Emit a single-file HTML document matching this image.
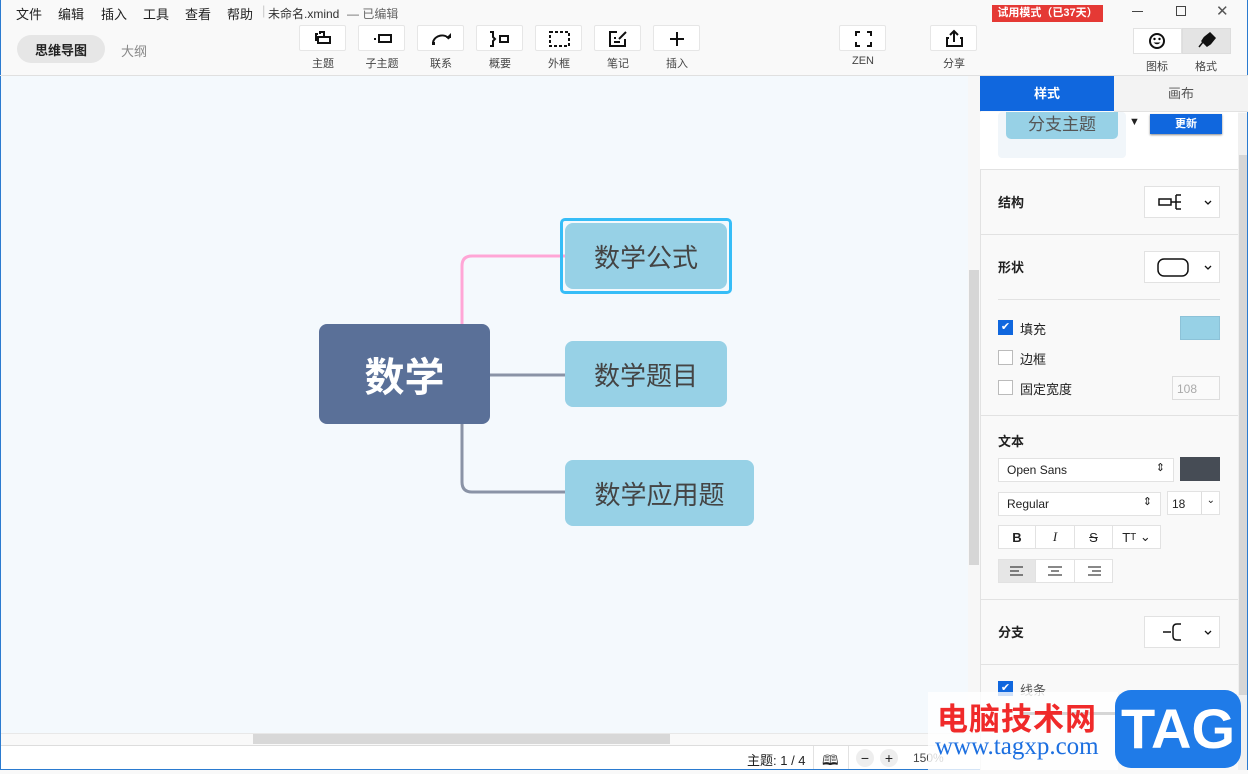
<!DOCTYPE html>
<html><head><meta charset="utf-8"><style>
*{box-sizing:border-box;margin:0;padding:0}
body{width:1248px;height:770px;overflow:hidden;background:#f9f9f9;font-family:"Liberation Sans","Noto Sans CJK SC",sans-serif;position:relative;color:#222}
.a{position:absolute}
.menu span{position:absolute;top:4px;font-size:13px;color:#222}
.tb{position:absolute;top:25px;width:47px;height:26px;background:#fff;border:1px solid #e6e6e6;border-radius:2px}
.tl{position:absolute;top:55px;font-size:11px;color:#444;text-align:center;width:60px}
.node{position:absolute;background:#97d1e6;border-radius:8px;color:#444;font-size:26px;display:flex;align-items:center;justify-content:center}
.sec{position:absolute;left:980px;width:258px;border-top:1px solid #e2e2e2}
.lbl{position:absolute;font-size:13px;font-weight:bold;color:#222}
.dd{position:absolute;background:#fff;border:1px solid #e2e2e2;height:32px}
.cb{position:absolute;width:15px;height:15px;border:1px solid #bbb;background:#fff}
.t13{position:absolute;font-size:13px;color:#222}
.btn{position:absolute;height:24px;background:#fff;border:1px solid #e2e2e2;display:flex;align-items:center;justify-content:center;font-size:13px}
</style></head><body>
<div class="a" style="left:0;top:0;width:1248px;height:770px;border:1px solid #2b7bd0;border-top:none"></div>
<div class="menu">
<span style="left:16px">文件</span><span style="left:58px">编辑</span><span style="left:101px">插入</span><span style="left:143px">工具</span><span style="left:185px">查看</span><span style="left:227px">帮助</span>
<span style="left:262px;top:3px;color:#ccc">|</span>
<span style="left:268px;font-size:12px;color:#333;top:5px">未命名.xmind</span><span style="left:347px;font-size:12px;color:#666;top:5px">— 已编辑</span>
</div>
<div class="a" style="left:17px;top:35px;width:88px;height:28px;background:#e6e6e6;border-radius:14px;font-size:13px;font-weight:bold;display:flex;align-items:center;justify-content:center">思维导图</div>
<div class="a" style="left:121px;top:41px;font-size:13px;color:#888">大纲</div>

<div class="tb" style="left:299px"><svg width="47" height="26"><path d="M18 8h-2v6h2M20 8v-2h4v4M18 11h12v6h-12z" fill="none" stroke="#111" stroke-width="2"/></svg></div><div class="tl" style="left:293px">主题</div>
<div class="tb" style="left:358px"><svg width="47" height="26"><rect x="15" y="12" width="2" height="2" fill="#111"/><rect x="20" y="9" width="12" height="7" fill="none" stroke="#111" stroke-width="2"/></svg></div><div class="tl" style="left:352px">子主题</div>
<div class="tb" style="left:417px"><svg width="47" height="26"><path d="M15 16c2-7 12-9 16-3" fill="none" stroke="#111" stroke-width="2"/><path d="M28 12h5v-5z" fill="#111"/><rect x="14" y="16" width="3" height="3" fill="#111"/></svg></div><div class="tl" style="left:411px">联系</div>
<div class="tb" style="left:476px"><svg width="47" height="26"><path d="M13 6h3v5l2 2l-2 2v5h-3" fill="none" stroke="#111" stroke-width="2"/><rect x="23" y="10" width="8" height="6" fill="none" stroke="#111" stroke-width="2"/></svg></div><div class="tl" style="left:470px">概要</div>
<div class="tb" style="left:535px"><svg width="47" height="26"><rect x="14" y="6" width="19" height="14" fill="none" stroke="#111" stroke-width="2" stroke-dasharray="3 2"/></svg></div><div class="tl" style="left:529px">外框</div>
<div class="tb" style="left:594px"><svg width="47" height="26"><path d="M22 6h-7v14h15v-7M19 12h2M19 16h6M24 13l7-7" fill="none" stroke="#111" stroke-width="2"/></svg></div><div class="tl" style="left:588px">笔记</div>
<div class="tb" style="left:653px"><svg width="47" height="26"><path d="M23 6v14M16 13h14" stroke="#111" stroke-width="2"/></svg></div><div class="tl" style="left:647px">插入</div>
<div class="tb" style="left:839px"><svg width="47" height="26"><path d="M16 10v-4h4M27 6h4v4M31 16v4h-4M20 20h-4v-4" fill="none" stroke="#111" stroke-width="2"/></svg></div><div class="tl" style="left:833px">ZEN</div>
<div class="tb" style="left:930px"><svg width="47" height="26"><path d="M18 12h-2v8h15v-8h-2M23 16v-11M19 9l4-4l4 4" fill="none" stroke="#111" stroke-width="2"/></svg></div><div class="tl" style="left:924px">分享</div>

<div class="a" style="left:992px;top:5px;width:111px;height:17px;background:#e53935;color:#fff;font-size:11px;font-weight:bold;text-align:center;line-height:17px;white-space:nowrap;overflow:hidden">试用模式（已37天）</div>
<div class="a" style="left:1132px;top:11px;width:11px;height:1px;background:#444"></div>
<div class="a" style="left:1176px;top:6px;width:10px;height:10px;border:1px solid #444"></div>
<div class="a" style="left:1216px;top:2px;font-size:15px;color:#555">✕</div>
<div class="a" style="left:1133px;top:28px;width:49px;height:26px;background:#fff;border:1px solid #e2e2e2"><svg width="47" height="24"><circle cx="23" cy="12" r="7" fill="none" stroke="#111" stroke-width="2"/><circle cx="20.5" cy="10" r="1.2"/><circle cx="25.5" cy="10" r="1.2"/><path d="M19.5 13.5q3.5 3.5 7 0z" fill="#111"/></svg></div>
<div class="a" style="left:1182px;top:28px;width:49px;height:26px;background:#e4e4e4;border:1px solid #ddd"><svg width="47" height="24"><path d="M22 8l5-4l5 5l-4 5zM21 9l6 6l-3 2l-5-5zM20 13l-4 5" fill="#111" stroke="#111" stroke-width="1.5"/></svg></div>
<div class="tl" style="left:1127px;top:58px">图标</div><div class="tl" style="left:1176px;top:58px">格式</div>
<div class="a" style="left:0;top:75px;width:1248px;height:1px;background:#e0e0e0"></div>

<div class="a" style="left:1px;top:76px;width:967px;height:658px;background:#f4f9fd"></div>
<div class="a" style="left:968px;top:76px;width:12px;height:658px;background:#f7f7f7"></div>
<div class="a" style="left:969px;top:270px;width:10px;height:295px;background:#d6d6d6"></div>
<div class="a" style="left:1px;top:733px;width:979px;height:12px;background:#f9f9f9;border-top:1px solid #e8e8e8"></div>
<div class="a" style="left:253px;top:734px;width:417px;height:10px;background:#d8d8d8"></div>
<div class="a" style="left:1px;top:745px;width:979px;height:24px;background:#fff;border-top:1px solid #ddd"></div>
<div class="a" style="left:747px;top:750px;font-size:13px">主题: 1 / 4</div>
<div class="a" style="left:813px;top:746px;width:1px;height:23px;background:#e2e2e2"></div>
<div class="a" style="left:822px;top:750px;font-size:14px">🕮</div>
<div class="a" style="left:848px;top:746px;width:1px;height:23px;background:#e2e2e2"></div>
<div class="a" style="left:856px;top:749px;width:18px;height:18px;border-radius:9px;background:#eee;text-align:center;font-size:14px;line-height:18px">−</div>
<div class="a" style="left:880px;top:749px;width:18px;height:18px;border-radius:9px;background:#eee;text-align:center;font-size:14px;line-height:18px">+</div>
<div class="a" style="left:913px;top:751px;font-size:12px;color:#444">150%</div>

<svg class="a" style="left:0;top:0" width="968" height="733">
<path d="M462 324V266q0-10 10-10H565" fill="none" stroke="#ffa6d6" stroke-width="3"/>
<path d="M490 375H565" fill="none" stroke="#8a93a6" stroke-width="3"/>
<path d="M462 424V482q0 10 10 10H565" fill="none" stroke="#8a93a6" stroke-width="3"/>
</svg>
<div class="a" style="left:319px;top:324px;width:171px;height:100px;background:#5a7098;border-radius:8px;color:#fff;font-size:40px;font-weight:bold;display:flex;align-items:center;justify-content:center">数学</div>
<div class="a" style="left:560px;top:218px;width:172px;height:76px;border:3px solid #36bdf7;border-radius:5px"></div>
<div class="node" style="left:565px;top:223px;width:162px;height:66px">数学公式</div>
<div class="node" style="left:565px;top:341px;width:162px;height:66px">数学题目</div>
<div class="node" style="left:565px;top:460px;width:189px;height:66px">数学应用题</div>

<div class="a" style="left:980px;top:76px;width:258px;height:694px;background:#f9f9f9;border-left:1px solid #e2e2e2"></div>
<div class="a" style="left:1238px;top:113px;width:9px;height:657px;background:#f0f0f0"></div>
<div class="a" style="left:1239px;top:155px;width:8px;height:540px;background:#d6d6d6"></div>
<div class="a" style="left:980px;top:76px;width:134px;height:35px;background:#1067de;color:#fff;font-size:13px;font-weight:bold;text-align:center;line-height:35px">样式</div>
<div class="a" style="left:1114px;top:76px;width:134px;height:36px;background:#f3f3f3;color:#555;font-size:13px;text-align:center;line-height:36px;border-bottom:1px solid #e2e2e2">画布</div>
<div class="a" style="left:980px;top:112px;width:258px;height:57px;background:#fff"></div>
<div class="a" style="left:998px;top:112px;width:128px;height:46px;background:#f1f6fa;border-radius:4px"></div>
<div class="a" style="left:1006px;top:112px;width:112px;height:27px;background:#97d1e6;border-radius:0 0 5px 5px;color:#555;font-size:17px;text-align:center;line-height:25px">分支主题</div>
<div class="a" style="left:1129px;top:116px;font-size:11px">▼</div>
<div class="a" style="left:1150px;top:114px;width:72px;height:20px;background:#1067de;color:#fff;font-size:11px;font-weight:bold;text-align:center;line-height:20px;box-shadow:0 1px 2px #888">更新</div>

<div class="sec" style="top:169px"></div>
<div class="lbl" style="left:998px;top:192px">结构</div>
<div class="dd" style="left:1144px;top:186px;width:76px"><svg width="74" height="30"><rect x="14" y="12" width="12" height="6" fill="none" stroke="#111" stroke-width="1.5"/><path d="M26 15h5M31 8v14M31 8h5M31 15h5M31 22h5" fill="none" stroke="#111" stroke-width="1.5"/><path d="M60 14l3 3l3-3" fill="none" stroke="#111" stroke-width="1.3"/></svg></div>
<div class="sec" style="top:234px"></div>
<div class="lbl" style="left:998px;top:257px">形状</div>
<div class="dd" style="left:1144px;top:251px;width:76px"><svg width="74" height="30"><rect x="13" y="7" width="30" height="17" rx="6" fill="none" stroke="#111" stroke-width="1.5"/><path d="M60 14l3 3l3-3" fill="none" stroke="#111" stroke-width="1.3"/></svg></div>
<div class="a" style="left:998px;top:299px;width:222px;height:1px;background:#e2e2e2"></div>
<div class="cb" style="left:998px;top:320px;background:#1067de;border-color:#1067de;color:#fff;font-size:11px;line-height:13px;text-align:center">✔</div>
<div class="t13" style="left:1020px;top:319px">填充</div>
<div class="a" style="left:1180px;top:316px;width:40px;height:24px;background:#97d1e6;border:1px solid #8cc2d8"></div>
<div class="cb" style="left:998px;top:350px"></div><div class="t13" style="left:1020px;top:349px">边框</div>
<div class="cb" style="left:998px;top:380px"></div><div class="t13" style="left:1020px;top:379px">固定宽度</div>
<div class="a" style="left:1172px;top:376px;width:48px;height:24px;border:1px solid #ddd;background:#fafafa;color:#aaa;font-size:12px;padding:5px 4px">108</div>
<div class="sec" style="top:415px"></div>
<div class="lbl" style="left:998px;top:431px">文本</div>
<div class="dd" style="left:998px;top:458px;width:176px;height:24px;font-size:12px;padding:4px 8px">Open Sans<span style="position:absolute;right:8px;top:2px;font-size:11px">⇕</span></div>
<div class="a" style="left:1180px;top:457px;width:40px;height:24px;background:#464c55"></div>
<div class="dd" style="left:998px;top:492px;width:163px;height:24px;font-size:12px;padding:4px 8px">Regular<span style="position:absolute;right:8px;top:2px;font-size:11px">⇕</span></div>
<div class="dd" style="left:1167px;top:491px;width:53px;height:24px;font-size:12px;padding:5px 4px">18<span style="position:absolute;left:33px;top:0;width:1px;height:22px;background:#ddd"></span><span style="position:absolute;right:4px;top:3px;font-size:10px">⌄</span></div>
<div class="btn" style="left:998px;top:525px;width:38px;font-weight:bold">B</div>
<div class="btn" style="left:1035px;top:525px;width:40px;font-style:italic;font-family:'Liberation Serif',serif">I</div>
<div class="btn" style="left:1074px;top:525px;width:39px;text-decoration:line-through">S</div>
<div class="btn" style="left:1112px;top:525px;width:49px">T<span style="font-size:10px">T</span>&nbsp;⌄</div>
<div class="btn" style="left:998px;top:559px;width:38px;background:#e6e6e6"><svg width="16" height="12"><path d="M1 2h13M1 6h9M1 10h13" stroke="#111"/></svg></div>
<div class="btn" style="left:1035px;top:559px;width:40px"><svg width="16" height="12"><path d="M1 2h14M4 6h8M1 10h14" stroke="#111"/></svg></div>
<div class="btn" style="left:1074px;top:559px;width:39px"><svg width="16" height="12"><path d="M2 2h13M6 6h9M2 10h13" stroke="#111"/></svg></div>
<div class="sec" style="top:599px"></div>
<div class="lbl" style="left:998px;top:622px">分支</div>
<div class="dd" style="left:1144px;top:616px;width:76px"><svg width="74" height="30"><path d="M18 15h8M36 7h-4q-4 0-4 4v8q0 4 4 4h4" fill="none" stroke="#111" stroke-width="1.5"/><path d="M60 14l3 3l3-3" fill="none" stroke="#111" stroke-width="1.3"/></svg></div>
<div class="sec" style="top:664px"></div>
<div class="cb" style="left:998px;top:681px;background:#1067de;border-color:#1067de;color:#fff;font-size:11px;line-height:13px;text-align:center">✔</div>
<div class="t13" style="left:1020px;top:680px;color:#555">线条</div>
<div class="a" style="left:1020px;top:712px;width:150px;height:3px;background:#333"></div>

<div class="a" style="left:928px;top:692px;width:190px;height:78px;background:rgba(255,255,255,0.8)"></div>
<div class="a" style="left:937px;top:694px;font-size:31px;font-weight:bold;color:#f02a2a;letter-spacing:1px">电脑技术网</div>
<div class="a" style="left:935px;top:733px;font-size:25px;color:#1c6fe0;font-family:'Liberation Serif',serif">www.tagxp.com</div>
<div class="a" style="left:1115px;top:690px;width:126px;height:78px;background:#1f7be8;border-radius:16px;color:#fff;font-size:56px;font-weight:bold;text-align:center;line-height:78px">TAG</div>
</body></html>
